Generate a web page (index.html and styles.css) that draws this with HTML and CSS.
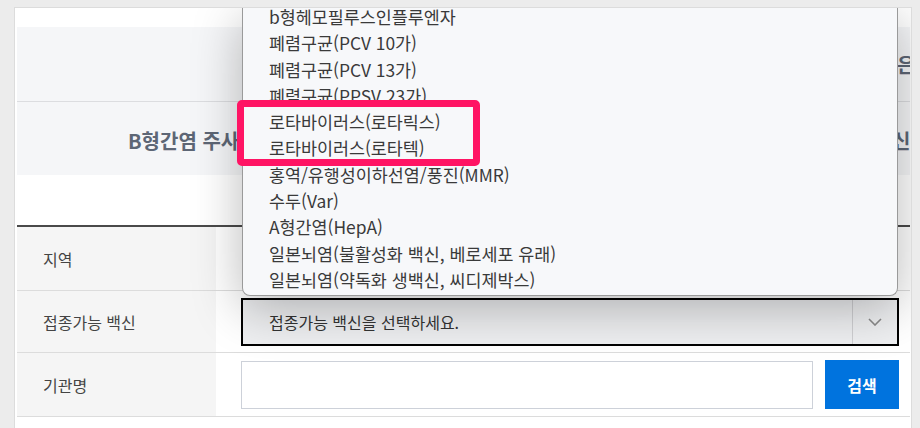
FILE: index.html
```html
<!DOCTYPE html>
<html lang="ko">
<head>
<meta charset="utf-8">
<title>접종기관 찾기</title>
<link rel="stylesheet" href="styles.css">
</head>
<body>
<div class="panel">
  <div class="head">
    <div class="head-row">
      <div class="head-cell"></div>
      <div class="head-edge e1">은</div>
    </div>
    <div class="head-row">
      <div class="head-cell">B형간염 주사</div>
      <div class="head-edge e2">신청</div>
    </div>
  </div>
  <div class="form">
    <div class="frow r1">
      <div class="flabel">지역</div>
      <div class="fval"></div>
    </div>
    <div class="frow r2">
      <div class="flabel">접종가능 백신</div>
      <div class="fval">
        <div class="select">
          <span class="select-text">접종가능 백신을 선택하세요.</span>
          <span class="select-arrow">
            <svg width="14" height="8" viewBox="0 0 14 8"><polyline points="1,1 7,7 13,1" fill="none" stroke="#8a8a8a" stroke-width="1.6"/></svg>
          </span>
        </div>
      </div>
    </div>
    <div class="frow r3">
      <div class="flabel">기관명</div>
      <div class="fval">
        <div class="input"></div>
        <button class="btn">검색</button>
      </div>
    </div>
  </div>

  <div class="dropdown">
    <ul class="dd-list">
      <li>b형헤모필루스인플루엔자</li>
      <li>폐렴구균(PCV 10가)</li>
      <li>폐렴구균(PCV 13가)</li>
      <li>폐렴구균(PPSV 23가)</li>
      <li>로타바이러스(로타릭스)</li>
      <li>로타바이러스(로타텍)</li>
      <li>홍역/유행성이하선염/풍진(MMR)</li>
      <li>수두(Var)</li>
      <li>A형간염(HepA)</li>
      <li>일본뇌염(불활성화 백신, 베로세포 유래)</li>
      <li>일본뇌염(약독화 생백신, 씨디제박스)</li>
    </ul>
  </div>
  <div class="highlight"></div>
</div>
</body>
</html>
```

FILE: styles.css
```css
* { box-sizing: border-box; }
html, body { margin: 0; padding: 0; }
body {
  background: #ececec;
  font-family: "Noto Sans CJK KR", "Noto Sans", sans-serif;
  width: 920px;
  height: 428px;
  overflow: hidden;
}
.panel {
  position: relative;
  overflow: hidden;
  margin: 7px 0 0 14px;
  width: 898px;
  height: 430px;
  background: #fff;
  border: 1px solid #dcdcdc;
  padding: 19px 1px 0 2px;
}
.head {
  background: #f5f6f8;
}
.head-row {
  display: flex;
  height: 74px;
  align-items: center;
}
.head-row + .head-row {
  border-top: 1px solid #dcdde0;
}
.head-cell {
  flex: 1;
  padding-left: 111px;
  padding-top: 3px;
  font-size: 20px;
  font-weight: 700;
  color: #5d6675;
}
.head-edge {
  width: 18px;
  overflow: hidden;
  white-space: nowrap;
  font-size: 20px;
  font-weight: 700;
  color: #5d6675;
}
.e1 { padding-left: 5px; }
.e2 { padding-left: 0; padding-top: 3px; }
.form {
  margin-top: 50px;
  border-top: 2px solid #4a4a4a;
}
.frow {
  display: flex;
  border-bottom: 1px solid #dcdcdc;
}
.r1 { height: 64px; }
.r2 { height: 62px; }
.r3 { height: 64px; }
.flabel {
  width: 199px;
  background: #f5f5f5;
  display: flex;
  align-items: center;
  padding-left: 26px;
  font-size: 16px;
  color: #444;
}
.fval {
  flex: 1;
  display: flex;
  align-items: center;
  padding: 0 11px 0 25px;
  gap: 12px;
}
.select {
  flex: 1;
  height: 48px;
  border: 2px solid #000;
  background: #eeeff1;
  display: flex;
  align-items: center;
}
.select-text {
  flex: 1;
  padding-left: 26px;
  font-size: 16px;
  color: #333;
}
.select-arrow {
  width: 45px;
  height: 100%;
  border-left: 1px solid #cfcfd2;
  display: flex;
  align-items: center;
  justify-content: center;
}
.select-arrow svg { display: block; }
.input {
  flex: 1;
  height: 48px;
  border: 1px solid #cdd1d9;
  background: #fff;
}
.btn {
  width: 74px;
  height: 49px;
  border: 0;
  background: #0073de;
  color: #fff;
  font-family: inherit;
  font-size: 16px;
  font-weight: 700;
  padding: 0;
}
.dropdown {
  position: absolute;
  left: 227px;
  top: 0;
  width: 656px;
  height: 288px;
  overflow: hidden;
  background: #f7f8fa;
  border: 1px solid #9a9a9a;
  border-top: 0;
  border-radius: 0 0 8px 8px;
  box-shadow: 0 12px 50px rgba(0, 0, 0, 0.28);
  z-index: 5;
}
.dd-list {
  margin: -4px 0 0 0;
  padding: 0;
  list-style: none;
}
.dd-list li {
  height: 26.3px;
  line-height: 26.3px;
  padding-left: 26px;
  font-size: 17.4px;
  color: #3a3a3a;
  white-space: nowrap;
}
.highlight {
  position: absolute;
  left: 222px;
  top: 92px;
  width: 243px;
  height: 66px;
  border: 7px solid #ff1464;
  border-radius: 5px;
  z-index: 6;
}
```
